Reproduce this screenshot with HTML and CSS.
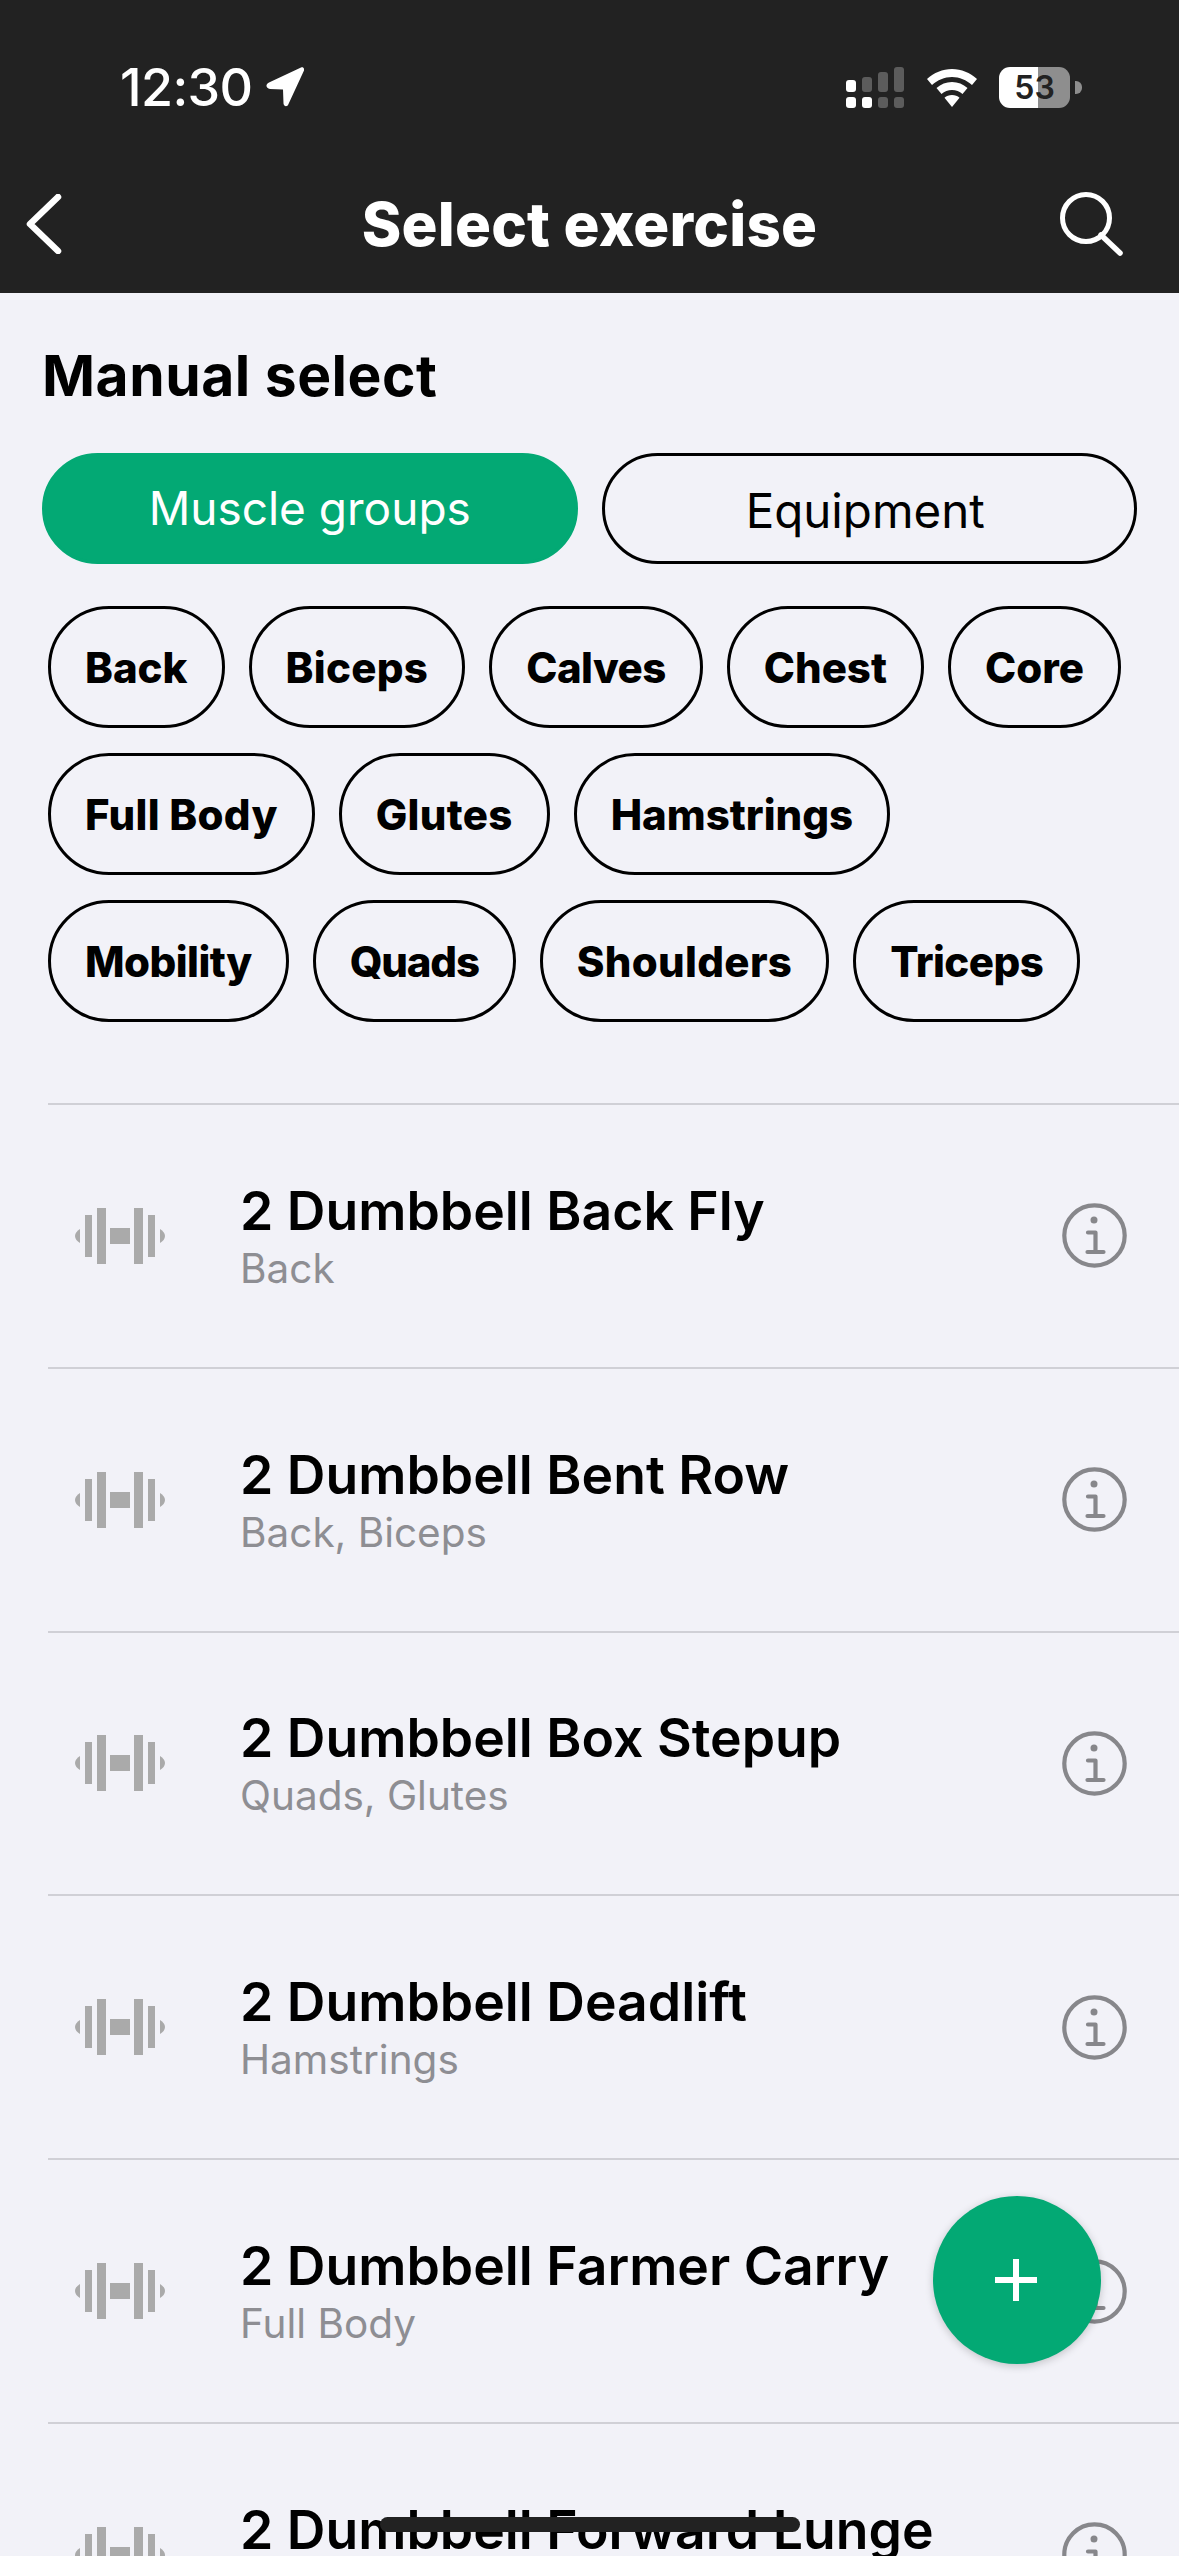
FILE: index.html
```html
<!DOCTYPE html>
<html lang="en">

<head>
    <meta charset="UTF-8">
    <meta name="viewport" content="width=device-width, initial-scale=1.0">
    <title>Select exercise</title>

    <link rel="stylesheet" href="styles.css">

</head>

<body>
    <svg class="defs" width="0" height="0">
        <symbol id="dumbbell" viewBox="0 0 90 56">
            <path d="M5 21v14C2 33 0 31 0 28s2-5 5-7z" />
            <rect x="10" y="7" width="7" height="42" />
            <rect x="22" y="0" width="9" height="56" />
            <rect x="35" y="20" width="20" height="16" />
            <rect x="59" y="0" width="9" height="56" />
            <rect x="73" y="7" width="7" height="42" />
            <path d="M85 21v14c3-2 5-4 5-7s-2-5-5-7z" />
        </symbol>
        <symbol id="info" viewBox="0 0 65 65">
            <circle cx="32.500" cy="32.500" r="30.200" fill="none" stroke="#87878b" stroke-width="4.200" />
            <circle cx="32" cy="17" r="3.500" fill="#87878b" />
            <path d="M26 29.500h7.500v19M25.500 49h16" fill="none" stroke="#87878b" stroke-width="4.200" stroke-linecap="round" stroke-linejoin="round" />
        </symbol>
    </svg>

    <div class="phone">
        <header class="top">
            <div class="status">
                <div class="time">
                    <span>12:30</span>
                    <svg class="arrow" width="38" height="40" viewBox="0 0 38 40">
                        <path d="M35 0.500 3 15.500c-4 2-3 6 1 6.500l13 0.500 0.500 14c0.500 3.500 4 3.500 5 0.500L38 3.500c0.500-2.500-1-4-3-3z" fill="#fff" />
                    </svg>
                </div>
                <div class="indicators">
                    <svg width="58" height="41" viewBox="0 0 58 41">
                        <rect x="0" y="13" width="10" height="12" rx="3" fill="#fff" />
                        <rect x="16" y="10" width="10" height="15" rx="3" fill="#5c5c5c" />
                        <rect x="32" y="5" width="10" height="20" rx="3" fill="#5c5c5c" />
                        <rect x="48" y="0" width="10" height="25" rx="3" fill="#5c5c5c" />
                        <rect x="0" y="30" width="10" height="11" rx="3" fill="#fff" />
                        <rect x="16" y="30" width="10" height="11" rx="3" fill="#fff" />
                        <rect x="32" y="30" width="10" height="11" rx="3" fill="#5c5c5c" />
                        <rect x="48" y="30" width="10" height="11" rx="3" fill="#5c5c5c" />
                    </svg>
                    <svg class="wifi" width="50" height="38" viewBox="0 0 50 38">
                        <path d="M25 0c9.500 0 18 3.700 25 10l-5 6c-5.500-5-12.500-8-20-8S10.500 11 5 16L0 10C7 3.700 15.500 0 25 0z" fill="#fff" />
                        <path d="M25 13c6 0 11 2.200 15.500 6l-5 6c-3-2.600-6.500-4-10.500-4s-7.500 1.400-10.500 4l-5-6C14 15.200 19 13 25 13z" fill="#fff" />
                        <path d="M25 26c3 0 5.500 1 7.500 2.800L25 38l-7.500-9.200C19.500 27 22 26 25 26z" fill="#fff" />
                    </svg>
                    <div class="battery">
                        <div class="battery-body">53</div>
                        <div class="battery-tip"></div>
                    </div>
                </div>
            </div>
            <div class="nav">
                <svg class="back" width="36" height="60" viewBox="0 0 36 60">
                    <path d="M32 3 4 30l28 27" fill="none" stroke="#fff" stroke-width="6.500" stroke-linecap="round" stroke-linejoin="round" />
                </svg>
                <h1>Select exercise</h1>
                <svg class="search" width="63" height="64" viewBox="0 0 63 64">
                    <circle cx="26" cy="26" r="23.500" fill="none" stroke="#fff" stroke-width="5" />
                    <path d="M41 43 60 61" stroke="#fff" stroke-width="5.500" stroke-linecap="round" />
                </svg>
            </div>
        </header>

        <section class="filters">
            <h2>Manual select</h2>
            <div class="tabs">
                <div class="tab active">Muscle groups</div>
                <div class="tab">Equipment</div>
            </div>
            <div class="chips">
                <div class="chip">Back</div>
                <div class="chip wide">Biceps</div>
                <div class="chip narrow">Calves</div>
                <div class="chip">Chest</div>
                <div class="chip">Core</div>
                <div class="chip wide">Full Body</div>
                <div class="chip wide">Glutes</div>
                <div class="chip">Hamstrings</div>
                <div class="chip narrow">Mobility</div>
                <div class="chip narrower">Quads</div>
                <div class="chip wide">Shoulders</div>
                <div class="chip narrow">Triceps</div>
            </div>
        </section>

        <ul class="list">
            <li class="row">
                <svg class="bell"><use href="#dumbbell" /></svg>
                <div class="names">
                    <div class="name">2 Dumbbell Back Fly</div>
                    <div class="muscle">Back</div>
                </div>
                <svg class="info"><use href="#info" /></svg>
            </li>
            <li class="row">
                <svg class="bell"><use href="#dumbbell" /></svg>
                <div class="names">
                    <div class="name">2 Dumbbell Bent Row</div>
                    <div class="muscle">Back, Biceps</div>
                </div>
                <svg class="info"><use href="#info" /></svg>
            </li>
            <li class="row">
                <svg class="bell"><use href="#dumbbell" /></svg>
                <div class="names">
                    <div class="name">2 Dumbbell Box Stepup</div>
                    <div class="muscle">Quads, Glutes</div>
                </div>
                <svg class="info"><use href="#info" /></svg>
            </li>
            <li class="row">
                <svg class="bell"><use href="#dumbbell" /></svg>
                <div class="names">
                    <div class="name">2 Dumbbell Deadlift</div>
                    <div class="muscle">Hamstrings</div>
                </div>
                <svg class="info"><use href="#info" /></svg>
            </li>
            <li class="row">
                <svg class="bell"><use href="#dumbbell" /></svg>
                <div class="names">
                    <div class="name">2 Dumbbell Farmer Carry</div>
                    <div class="muscle">Full Body</div>
                </div>
                <svg class="info"><use href="#info" /></svg>
            </li>
            <li class="row">
                <svg class="bell"><use href="#dumbbell" /></svg>
                <div class="names">
                    <div class="name">2 Dumbbell Forward Lunge</div>
                    <div class="muscle"></div>
                </div>
                <svg class="info"><use href="#info" /></svg>
            </li>
        </ul>

        <!-- These two float over the list -->
        <div class="fab"></div>
        <div class="home-bar"></div>
    </div>
</body>

</html>
```

FILE: styles.css
```css
* {
    box-sizing: border-box;
}

html,
body {
    margin: 0;
    height: 100%;
    overflow: hidden;
}

body {
    font-family: Inter, "Liberation Sans", sans-serif;
    background-color: #f2f2f8;
    color: #000;
}

.defs {
    position: absolute;
}

.phone {
    position: relative;
    width: 1179px;
    height: 2556px;
    overflow: hidden;
}

/* Dark top area */
.top {
    height: 293px;
    background-color: #222;
    color: #fff;
}

.status {
    display: flex;
    justify-content: space-between;
    align-items: flex-start;
    height: 180px;
    padding: 62px 97px 0 120px;
}

.time {
    display: flex;
    align-items: center;
    gap: 13px;
    font-size: 52px;
    font-weight: 500;
    line-height: 52px;
    letter-spacing: -0.6px;
}

.arrow {
    margin-top: -2px;
}

.indicators {
    display: flex;
    align-items: flex-start;
    gap: 22px;
    margin-top: 5px;
}

.wifi {
    margin: 2px 0 0 1px;
}

.battery {
    display: flex;
    align-items: center;
    gap: 5px;
}

.battery-body {
    width: 71px;
    height: 41px;
    border-radius: 11px;
    background: linear-gradient(to right, #fff 55%, #8e8e8e 55%);
    color: #222;
    font-size: 32px;
    font-weight: 600;
    line-height: 41px;
    text-align: center;
}

.battery-tip {
    width: 7px;
    height: 13px;
    border-radius: 0 6px 6px 0;
    background-color: #8e8e8e;
}

.nav {
    display: grid;
    grid-template-columns: 1fr auto 1fr;
    align-items: center;
    height: 88px;
    padding: 0 56px 0 26px;
}

.nav h1 {
    margin: 0;
    padding-left: 30px;
    font-size: 60px;
    font-weight: 800;
    line-height: 70px;
    letter-spacing: 0.2px;
}

.search {
    justify-self: end;
}

/* Filters */
.filters {
    padding: 0 42px;
}

.filters h2 {
    margin: 0;
    padding-top: 50px;
    font-size: 57px;
    font-weight: 700;
    line-height: 65px;
    letter-spacing: 0.5px;
}

.tabs {
    display: grid;
    grid-template-columns: 1fr 1fr;
    gap: 24px;
    margin-top: 45px;
}

.tab {
    height: 111px;
    padding-right: 8px;
    border: 3px solid #000;
    border-radius: 56px;
    font-size: 47.500px;
    line-height: 110px;
    text-align: center;
}

.tab.active {
    padding-right: 0;
    background-color: #03a974;
    border-color: #03a974;
    color: #fff;
    font-size: 46px;
    line-height: 105px;
}

.chips {
    display: flex;
    flex-wrap: wrap;
    gap: 25px 24px;
    margin-top: 42px;
    padding-left: 6px;
}

.chip {
    height: 122px;
    padding: 0 34px;
    border: 3px solid #000;
    border-radius: 61px;
    font-size: 42px;
    font-weight: 800;
    line-height: 118px;
}

.chip.wide {
    letter-spacing: 0.3px;
}

.chip.narrow {
    letter-spacing: -0.55px;
}

.chip.narrower {
    letter-spacing: -1.2px;
}

/* Exercise list */
.list {
    margin: 81px 0 0 48px;
    padding: 0;
    list-style: none;
}

.row {
    display: flex;
    align-items: center;
    height: 263.800px;
    padding: 0 52px 0 27px;
    border-top: 2px solid #d0d0d6;
}

.bell {
    flex: none;
    width: 90px;
    height: 56px;
    fill: #aaa;
}

.names {
    flex: 1;
    margin-left: 75px;
    padding-top: 3px;
}

.name {
    font-size: 53.500px;
    font-weight: 600;
    line-height: 60px;
}

.muscle {
    min-height: 50px;
    margin-top: 3px;
    color: #8e8e93;
    font-size: 40.500px;
    line-height: 50px;
}

.info {
    flex: none;
    width: 65px;
    height: 65px;
}

.fab {
    position: absolute;
    left: 933px;
    top: 2196px;
    width: 168px;
    height: 168px;
    border-radius: 50%;
    background-color: #03a974;
    box-shadow: 0 2px 8px rgba(0, 0, 0, 0.2);
}

.fab::before,
.fab::after {
    content: "";
    position: absolute;
    background-color: #fff;
}

.fab::before {
    left: 62px;
    top: 81px;
    width: 42px;
    height: 6px;
}

.fab::after {
    left: 80px;
    top: 63px;
    width: 6px;
    height: 42px;
}

.home-bar {
    position: absolute;
    left: 380px;
    top: 2517px;
    width: 420px;
    height: 15px;
    border-radius: 8px;
    background-color: #222;
}
```
